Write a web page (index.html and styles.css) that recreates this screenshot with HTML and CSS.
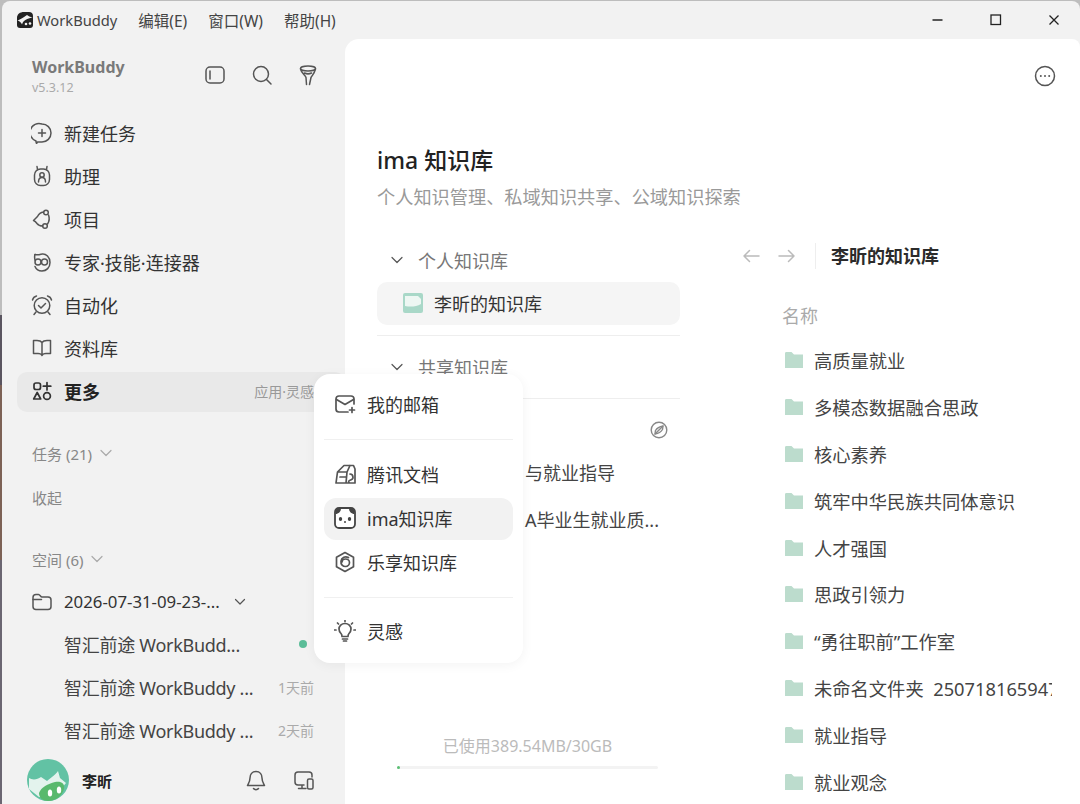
FILE: index.html
```html
<!DOCTYPE html>
<html lang="zh-CN">

<head>
    <meta charset="UTF-8">
    <title>WorkBuddy</title>
    <link rel="stylesheet" href="styles.css">
</head>

<body>
    <div class="window">
        <!-- 标题栏 -->
        <div class="titlebar">
            <svg class="logo" viewBox="0 0 18 18"><path d="M1 7C1 3 4 1 8 1h5c2.500 0 4 1.500 4 4v9c0 2-1 3-3 3H4c-2 0-3-1-3-3z" fill="#222"/><path d="M1.500 9.500c3-1 6-3 9.500-5.500 1.500 1 3 2 5.500 2.500-3 .5-6.500 1.500-8.500 3.500-1 1-1.500 2-2 3.500-1-2-2.500-3.500-4.500-4z" fill="#f2f2f2"/><circle cx="10" cy="13" r="1.300" fill="#f2f2f2"/><circle cx="14" cy="12.500" r="1.300" fill="#f2f2f2"/></svg>
            <span class="app-name">WorkBuddy</span>
            <span class="menu">编辑(E)</span>
            <span class="menu">窗口(W)</span>
            <span class="menu">帮助(H)</span>
            <div class="controls">
                <svg viewBox="0 0 12 12"><path d="M.5 6h10" stroke="#222" stroke-width="1.300"/></svg>
                <svg viewBox="0 0 12 12"><rect x="1" y="1" width="9.500" height="9.500" fill="none" stroke="#222" stroke-width="1.300"/></svg>
                <svg viewBox="0 0 12 12"><path d="M1.500 1.500l9 9m0-9l-9 9" stroke="#222" stroke-width="1.300"/></svg>
            </div>
        </div>

        <div class="body">
            <!-- 左侧栏 -->
            <div class="sidebar">
                <div class="side-head">
                    <div class="brand">
                        <div class="brand-name">WorkBuddy</div>
                        <div class="brand-ver">v5.3.12</div>
                    </div>
                    <div class="head-icons">
                        <svg class="ic" viewBox="0 0 22 22"><rect x="2" y="3" width="18" height="16" rx="4"/><path d="M6 7v8"/></svg>
                        <svg class="ic" viewBox="0 0 22 22"><circle cx="10" cy="10" r="7.500"/><path d="M15.500 15.500l4.500 4.500"/></svg>
                        <svg class="ic" viewBox="0 0 22 22"><ellipse cx="11" cy="4.500" rx="7.500" ry="2.500"/><path d="M3.500 5c1 4 4.500 6 5.500 8.500l.5 7M18.500 5c-1 4-3 6-4.500 8.500l-1.500 7M7.500 9c2 1 5 1 7 0"/></svg>
                    </div>
                </div>

                <ul class="nav">
                    <li>
                        <svg class="ic" viewBox="0 0 22 22"><path d="M11 2a9 9 0 0 1 0 18H6.500l-1 1.500c-.5-1-.5-2-.5-2.500A9 9 0 0 1 11 2z"/><path d="M7.500 11h7M11 7.500v7"/></svg>
                        <span>新建任务</span>
                    </li>
                    <li>
                        <svg class="ic" viewBox="0 0 22 22"><rect x="3.500" y="4" width="15" height="16.500" rx="6"/><path d="M6.500 4.500L6 1.500M15.500 4.500l.5-3"/><circle cx="11" cy="10" r="2.200"/><path d="M7.500 17c0-3 1.500-4.500 3.500-4.500s3.500 1.500 3.500 4.500"/></svg>
                        <span>助理</span>
                    </li>
                    <li>
                        <svg class="ic" viewBox="0 0 22 22"><circle cx="15" cy="4.500" r="2.300"/><circle cx="14" cy="18" r="2.300"/><path d="M12.500 4C9 4.500 7.500 6.500 6.500 8.500L2.500 12.500c1.500.5 2.500 1.500 3.500 3 1.500 2 3.500 2.500 5.700 2.500M17.500 7c1 2.500 1 6-1 9"/></svg>
                        <span>项目</span>
                    </li>
                    <li>
                        <svg class="ic" viewBox="0 0 22 22"><path d="M4 3.500c3 1 5 0 7-.5 4-.5 8 3 8 8.500 0 5-3.500 8.500-8 8.500-3.500 0-6-2-7-4.500"/><circle cx="7" cy="11" r="3"/><circle cx="13.500" cy="11" r="3"/><path d="M4 9c-.5-2-.5-4 0-5.500"/></svg>
                        <span>专家·技能·连接器</span>
                    </li>
                    <li>
                        <svg class="ic" viewBox="0 0 22 22"><circle cx="11" cy="11.500" r="7.800"/><path d="M7.500 11.500l2.500 2.500 4.500-4.500M1.500 6c.5-2 2-3.500 4-4M20.500 6c-.5-2-2-3.500-4-4M5 18l-2 2.500M17 18l2 2.500"/></svg>
                        <span>自动化</span>
                    </li>
                    <li>
                        <svg class="ic" viewBox="0 0 22 22"><path d="M11 5.500C10 4 8 3.500 6 3.500H2.500v13H7c2 0 3.500.5 4 2 .5-1.500 2-2 4-2h4.500v-13H16c-2 0-4 .5-5 2zM11 5.500v13"/></svg>
                        <span>资料库</span>
                    </li>
                    <li class="active">
                        <svg class="ic ic-dark" viewBox="0 0 22 22"><rect x="3" y="3" width="6.500" height="6.500" rx="2"/><path d="M16 2.500v7.500M12.300 6.200h7.500"/><path d="M6.200 12.500l3.500 6.500H2.700z" stroke-linejoin="round"/><circle cx="16" cy="16" r="3.400"/></svg>
                        <span>更多</span>
                        <em>应用·灵感</em>
                    </li>
                </ul>

                <div class="section first">任务 (21)
                    <svg class="chev light" viewBox="0 0 12 12"><path d="M1 3.500l5 5 5-5"/></svg>
                </div>
                <div class="section fold">收起</div>
                <div class="section space">空间 (6)
                    <svg class="chev light" viewBox="0 0 12 12"><path d="M1 3.500l5 5 5-5"/></svg>
                </div>

                <div class="folder-row">
                    <svg class="ic" viewBox="0 0 22 22"><path d="M2 6.500C2 4.500 3 3.500 5 3.500h2.500c1.500 0 2 2.500 3.500 2.500h6c2 0 3 1.500 3 3v6.500c0 2-1 3-3 3H5c-2 0-3-1-3-3z"/><path d="M2 8.500h8.500"/></svg>
                    <span>2026-07-31-09-23-...</span>
                    <svg class="chev" viewBox="0 0 12 12"><path d="M1.500 3.500l4.500 4.500 4.500-4.500"/></svg>
                </div>
                <div class="task-row">
                    <span class="task-name">智汇前途 WorkBudd...</span>
                    <i class="dot"></i>
                </div>
                <div class="task-row">
                    <span class="task-name">智汇前途 WorkBuddy ...</span>
                    <em>1天前</em>
                </div>
                <div class="task-row">
                    <span class="task-name">智汇前途 WorkBuddy ...</span>
                    <em>2天前</em>
                </div>

                <div class="user">
                    <svg class="avatar" viewBox="0 0 42 42"><circle cx="21" cy="21" r="21" fill="#62c2a4"/><path d="M2 19c3 2 8 2 12-1l6 4c4-3 9-7 11-10l2 7 6 5-12 14H12L2 30z" fill="#e3f3ed"/><path d="M12 34c2-6 9-9 16-11 6-1 10 1 9 7-2 7-8 12-16 12-5 0-9-3-9-8z" fill="#58b96d"/><ellipse cx="23" cy="34" rx="2.200" ry="3.500" fill="#fff"/><ellipse cx="32" cy="31" rx="2.200" ry="3.500" fill="#fff"/></svg>
                    <span class="user-name">李昕</span>
                    <svg class="ic" viewBox="0 0 22 22"><path d="M11 2.500c-4 0-6 3-6 6.500 0 4-2 6-2.500 7.500h17C19 15 17 13 17 9c0-3.500-2-6.500-6-6.500zM8.500 19.500c1 1.500 4 1.500 5 0"/></svg>
                    <svg class="ic ic-last" viewBox="0 0 22 22"><path d="M11 16H5c-2 0-3-1-3-3V6c0-2 1-3 3-3h11c2 0 3 1 3 3v2M9 16v3.500M5.500 19.500H13"/><rect x="14.500" y="10" width="5.500" height="10" rx="1.500"/></svg>
                </div>
            </div>

            <!-- 主内容 -->
            <div class="main">
                <svg class="more-btn" viewBox="0 0 22 22"><circle cx="11" cy="11" r="9.500"/><circle class="pip" cx="6.800" cy="11" r="1"/><circle class="pip" cx="11" cy="11" r="1"/><circle class="pip" cx="15.200" cy="11" r="1"/></svg>
                <h1>ima 知识库</h1>
                <p class="sub">个人知识管理、私域知识共享、公域知识探索</p>

                <div class="columns">
                    <div class="tree">
                        <div class="tree-head">
                            <svg class="chev" viewBox="0 0 12 12"><path d="M1 3.500l5 5 5-5"/></svg>
                            <span>个人知识库</span>
                        </div>
                        <div class="tree-item">
                            <svg class="kb-ic" viewBox="0 0 20 20"><rect width="20" height="20" rx="2" fill="#a9d8c8"/><path d="M2 3h13l3 3v5c-5 3-11 3-16 2z" fill="#eef7f3"/></svg>
                            <span>李昕的知识库</span>
                        </div>
                        <div class="tree-line"></div>
                        <div class="tree-head second">
                            <svg class="chev" viewBox="0 0 12 12"><path d="M1 3.500l5 5 5-5"/></svg>
                            <span>共享知识库</span>
                        </div>
                        <div class="tree-line tight"></div>
                        <div class="public-head">
                            <svg class="compass" viewBox="0 0 18 18"><circle cx="9" cy="9" r="7.800"/><path d="M13 5c-3 .5-6 2-7.500 4.500L5 13c3-.5 6-2 7.500-4.500z"/><path d="M5 13l8-8"/></svg>
                        </div>
                        <div class="public-item">与就业指导</div>
                        <div class="public-item">A毕业生就业质...</div>
                        <div class="usage">
                            <div class="usage-text">已使用389.54MB/30GB</div>
                            <div class="usage-bar"><div class="usage-fill" style="width: 1.300%"></div></div>
                        </div>
                    </div>

                    <div class="files">
                        <div class="files-top">
                            <svg class="arrow" viewBox="0 0 18 14"><path d="M17 7H2M7.500 1.500L2 7l5.500 5.500"/></svg>
                            <svg class="arrow" viewBox="0 0 18 14"><path d="M1 7h15M10.500 1.500L16 7l-5.500 5.500"/></svg>
                            <b>李昕的知识库</b>
                        </div>
                        <div class="files-col">名称</div>
                        <ul class="file-list">
                            <li><svg viewBox="0 0 18 16"><path d="M0 1.500C0 .5.500 0 1.500 0h5L9 2.500h9V16H0z"/></svg><span>高质量就业</span></li>
                            <li><svg viewBox="0 0 18 16"><path d="M0 1.500C0 .5.500 0 1.500 0h5L9 2.500h9V16H0z"/></svg><span>多模态数据融合思政</span></li>
                            <li><svg viewBox="0 0 18 16"><path d="M0 1.500C0 .5.500 0 1.500 0h5L9 2.500h9V16H0z"/></svg><span>核心素养</span></li>
                            <li><svg viewBox="0 0 18 16"><path d="M0 1.500C0 .5.500 0 1.500 0h5L9 2.500h9V16H0z"/></svg><span>筑牢中华民族共同体意识</span></li>
                            <li><svg viewBox="0 0 18 16"><path d="M0 1.500C0 .5.500 0 1.500 0h5L9 2.500h9V16H0z"/></svg><span>人才强国</span></li>
                            <li><svg viewBox="0 0 18 16"><path d="M0 1.500C0 .5.500 0 1.500 0h5L9 2.500h9V16H0z"/></svg><span>思政引领力</span></li>
                            <li><svg viewBox="0 0 18 16"><path d="M0 1.500C0 .5.500 0 1.500 0h5L9 2.500h9V16H0z"/></svg><span>“勇往职前”工作室</span></li>
                            <li><svg viewBox="0 0 18 16"><path d="M0 1.500C0 .5.500 0 1.500 0h5L9 2.500h9V16H0z"/></svg><span>未命名文件夹&nbsp;&nbsp;250718165947</span></li>
                            <li><svg viewBox="0 0 18 16"><path d="M0 1.500C0 .5.500 0 1.500 0h5L9 2.500h9V16H0z"/></svg><span>就业指导</span></li>
                            <li><svg viewBox="0 0 18 16"><path d="M0 1.500C0 .5.500 0 1.500 0h5L9 2.500h9V16H0z"/></svg><span>就业观念</span></li>
                        </ul>
                    </div>
                </div>
            </div>

            <!-- 更多菜单 -->
            <div class="popup">
                <div class="pop-item">
                    <svg class="ic" viewBox="0 0 22 22"><path d="M20 11V6c0-2-1-3-3-3H5C3 3 2 4 2 6v10c0 2 1 3 3 3h9"/><path d="M2.500 6.500l8.500 5 8.500-5"/><path d="M18 14.500v5M15.500 17h5"/></svg>
                    <span>我的邮箱</span>
                </div>
                <div class="pop-line"></div>
                <div class="pop-item">
                    <svg class="ic" viewBox="0 0 22 22"><path d="M2 20l1.500-11L10 2.500h9.500L21 6v14zM3.500 9H13l-1 11M13 9l3-6.500M11.500 14H6M16 11c2.500 0 3 2 3 3.500S17 17 15.500 17.500 14.500 20 16 20"/></svg>
                    <span>腾讯文档</span>
                </div>
                <div class="pop-item hover">
                    <svg class="panda" viewBox="0 0 22 22"><rect x="1" y="1" width="20" height="20" rx="4" fill="#fff" stroke="#444" stroke-width="1.800"/><path d="M1.500 7V4.500C1.500 2.500 2.500 1.500 4.500 1.500H7C7 4.500 4.500 7 1.500 7zM20.500 7V4.500c0-2-1-3-3-3H15c0 3 2.500 5.500 5.500 5.500z" fill="#444"/><ellipse cx="6.500" cy="12" rx="1.700" ry="2" fill="#444"/><ellipse cx="15.500" cy="12" rx="1.700" ry="2" fill="#444"/><circle cx="11" cy="15" r="1" fill="#444"/></svg>
                    <span>ima知识库</span>
                </div>
                <div class="pop-item">
                    <svg class="ic" viewBox="0 0 22 22"><path d="M11 1.500l8.500 4.800v9.400L11 20.500l-8.500-4.800V6.300z"/><path d="M14.500 6.500c-3-1.500-7-.5-7.500 3.500-.5 3.500 2 5.500 4.500 5.500s4-2 4-4-2-3.500-4-3.500-3.500 1.500-3.500 3"/></svg>
                    <span>乐享知识库</span>
                </div>
                <div class="pop-line last"></div>
                <div class="pop-item">
                    <svg class="ic" viewBox="0 0 22 22"><path d="M7 13.500c-1-1-2-2.500-2-4.500 0-3 2.500-5.500 6-5.500s6 2.500 6 5.500c0 2-1 3.500-2 4.500-1 1-1 2-1 3H8c0-1 0-2-1-3zM8.500 19h5M9.500 21h3M.5 10h1.500M20 10h1.500M3.500 3l1 1M18.500 3l-1 1M11 .5v1"/></svg>
                    <span>灵感</span>
                </div>
            </div>
        </div>
    </div>
</body>

</html>
```

FILE: styles.css
```css
* {
    margin: 0;
    padding: 0;
    box-sizing: border-box;
    list-style-type: none;
}

html,
body {
    height: 100%;
    overflow: hidden;
}

body {
    font-family: "Noto Sans", "Noto Sans CJK SC", sans-serif;
    color: #333;
    background: linear-gradient(to bottom, #bdbdbd 0, #bdbdbd 315px, #5a5560 315px, #5a5560 385px, #7d6256 385px, #7d6256 560px, #6b6672 560px);
}

em {
    font-style: normal;
}

.window {
    height: 804px;
    margin: 1px 0 0 2px;
    background: #f2f2f2;
    border-radius: 8px 8px 0 0;
    display: flex;
    flex-direction: column;
    overflow: hidden;
}

/* 标题栏 */
.titlebar {
    height: 38px;
    flex: none;
    display: flex;
    align-items: center;
    padding-left: 14px;
}

.logo {
    width: 18px;
    height: 18px;
    margin-right: 3px;
}

.app-name {
    color: #444;
    font-size: 14.700px;
}

.menu {
    margin-left: 21px;
    color: #444;
    font-size: 15.500px;
}

.controls {
    margin-left: auto;
    display: flex;
    gap: 46px;
    padding-right: 20px;
}

.controls svg {
    width: 12px;
    height: 12px;
}

.body {
    flex: 1;
    display: flex;
    position: relative;
    min-height: 0;
}

/* 左侧栏 */
.sidebar {
    width: 343px;
    flex: none;
    padding: 0 0 0 15px;
}

.ic {
    width: 22px;
    height: 22px;
    flex: none;
    fill: none;
    stroke: #555;
    stroke-width: 1.500;
    stroke-linecap: round;
    stroke-linejoin: round;
}

.ic-dark {
    stroke: #333;
    stroke-width: 1.700;
}

.side-head {
    height: 72px;
    display: flex;
    align-items: flex-end;
    padding: 0 26px 13px 15px;
}

.brand-name {
    font-size: 16px;
    font-weight: 700;
    color: #7a7a7a;
    line-height: 20px;
    margin-bottom: 1px;
}

.brand-ver {
    font-size: 12.500px;
    color: #aaa;
    line-height: 20px;
}

.head-icons {
    margin-left: auto;
    display: flex;
    gap: 24.500px;
    padding-bottom: 12px;
}

.nav li {
    height: 43px;
    display: flex;
    align-items: center;
    gap: 11px;
    padding: 0 31px 0 14px;
    font-size: 18px;
    color: #333;
}

.nav li.active {
    height: 40px;
    margin: 3px 0 0;
    padding-bottom: 2px;
    background: #e9e9e9;
    border-radius: 10px;
    font-weight: 700;
    color: #222;
}

.nav li em {
    margin-left: auto;
    font-size: 14px;
    font-weight: 400;
    color: #999;
}

.section {
    height: 24px;
    display: flex;
    align-items: center;
    gap: 8px;
    margin-left: 15px;
    font-size: 15px;
    color: #888;
}

.section.first {
    margin-top: 29px;
}

.section.fold {
    margin-top: 20px;
}

.section.space {
    margin-top: 38px;
}

.chev {
    width: 12px;
    height: 12px;
    fill: none;
    stroke: #555;
    stroke-width: 1.200;
    stroke-linecap: round;
    stroke-linejoin: round;
}

.chev.light {
    stroke: #aaa;
}

.folder-row {
    height: 41px;
    margin-top: 10px;
    display: flex;
    align-items: center;
    gap: 11px;
    padding-left: 14px;
    font-size: 16.800px;
    color: #333;
}

.folder-row .chev {
    margin-left: 3px;
}

.task-row {
    height: 43px;
    display: flex;
    align-items: center;
    padding: 0 31px 0 47px;
    font-size: 18px;
    color: #444;
}

.task-name {
    white-space: nowrap;
    letter-spacing: -0.280px;
}

.task-row em {
    margin-left: auto;
    font-size: 14px;
    color: #aaa;
}

.dot {
    margin-left: auto;
    margin-right: 7px;
    width: 8px;
    height: 8px;
    border-radius: 50%;
    background: #5bbd98;
}

.user {
    height: 44px;
    margin-top: 7px;
    display: flex;
    align-items: center;
    padding: 0 30px 0 10px;
}

.avatar {
    width: 42px;
    height: 42px;
    margin-right: 13px;
}

.user-name {
    font-size: 15px;
    font-weight: 700;
    color: #222;
}

.user .ic {
    margin-left: auto;
}

.user .ic-last {
    margin-left: 26px;
}

/* 主内容 */
.main {
    flex: 1;
    position: relative;
    background: #fff;
    border-radius: 14px 8px 0 0;
    padding: 105px 0 0 32px;
    min-width: 0;
    overflow: hidden;
}

.more-btn {
    position: absolute;
    top: 26px;
    right: 24px;
    width: 22px;
    height: 22px;
    fill: none;
    stroke: #555;
    stroke-width: 1.500;
}

.more-btn .pip {
    fill: #555;
    stroke: none;
}

h1 {
    font-size: 23px;
    font-weight: 500;
    color: #222;
    line-height: 32px;
}

.sub {
    font-size: 18.200px;
    color: #999;
    line-height: 26px;
    margin: 8px 0 0;
}

.columns {
    display: flex;
    margin-top: 30px;
}

.tree {
    width: 303px;
    flex: none;
}

.tree-head {
    height: 40px;
    margin-bottom: 2px;
    display: flex;
    align-items: center;
    gap: 15px;
    padding-left: 14px;
    font-size: 18px;
    color: #777;
}

.tree-head.second {
    margin-top: 11px;
    margin-bottom: 0;
}

.tree-item {
    height: 43px;
    padding-bottom: 1px;
    background: #f5f5f5;
    border-radius: 10px;
    display: flex;
    align-items: center;
    gap: 11px;
    padding-left: 26px;
    font-size: 18px;
    color: #333;
}

.kb-ic {
    width: 20px;
    height: 20px;
}

.tree-line {
    height: 1px;
    background: #eee;
    margin-top: 10px;
}

.tree-line.tight {
    margin-top: 11px;
}

.public-head {
    height: 62px;
    display: flex;
    justify-content: flex-end;
    align-items: center;
    padding-right: 12px;
}

.compass {
    width: 18px;
    height: 18px;
    fill: none;
    stroke: #888;
    stroke-width: 1.400;
}

.public-item {
    height: 47px;
    margin-top: -11px;
    padding-left: 148px;
    font-size: 18px;
    line-height: 47px;
    color: #444;
    white-space: nowrap;
}

.public-item + .public-item {
    margin-top: 0;
}

.usage {
    margin-top: 190px;
    padding-left: 20px;
}

.usage-text {
    width: 261px;
    text-align: center;
    font-size: 16px;
    line-height: 24px;
    color: #bbb;
}

.usage-bar {
    width: 261px;
    height: 3px;
    margin-top: 8px;
    background: #f3f3f3;
    border-radius: 2px;
}

.usage-fill {
    height: 3px;
    background: #5bbf74;
    border-radius: 2px;
}

.files {
    flex: 1;
    min-width: 0;
    padding-right: 28px;
}

.files-top {
    height: 34px;
    display: flex;
    align-items: center;
    margin-top: -1px;
    padding-left: 62px;
    gap: 18px;
}

.arrow {
    width: 18px;
    height: 14px;
    fill: none;
    stroke: #bbb;
    stroke-width: 1.500;
    stroke-linecap: round;
    stroke-linejoin: round;
}

.files-top b {
    margin-left: 1px;
    padding-left: 15px;
    border-left: 1px solid #eee;
    height: 26px;
    line-height: 26px;
    font-size: 18px;
    font-weight: 700;
    color: #2b2b2b;
}

.files-col {
    margin: 30px 0 0 102px;
    font-size: 18px;
    line-height: 26px;
    color: #aaa;
}

.file-list {
    margin: 7.500px 0 0 105px;
    overflow: hidden;
}

.file-list li {
    height: 46.900px;
    display: flex;
    align-items: center;
    gap: 11px;
    font-size: 18.300px;
    color: #444;
    white-space: nowrap;
}

.file-list svg {
    width: 18px;
    height: 16px;
    flex: none;
    fill: #bcdccd;
}

/* 更多菜单 */
.popup {
    position: absolute;
    left: 312px;
    top: 335px;
    width: 209px;
    height: 289px;
    background: #fff;
    border-radius: 16px;
    box-shadow: 0 2px 12px rgba(0, 0, 0, 0.05);
    padding: 8px 10px;
}

.popup .ic {
    stroke-width: 1.700;
}

.pop-item {
    height: 42px;
    margin: 2px 0;
    display: flex;
    align-items: center;
    gap: 11px;
    padding: 0 0 2px 10px;
    font-size: 18px;
    color: #333;
    border-radius: 12px;
}

.pop-item.hover {
    background: #f2f2f2;
}

.panda {
    width: 22px;
    height: 22px;
    flex: none;
}

.pop-line {
    height: 1px;
    background: #f0f0f0;
    margin: 13px 0 14px;
}

.pop-line.last {
    margin-bottom: 13px;
}
```
